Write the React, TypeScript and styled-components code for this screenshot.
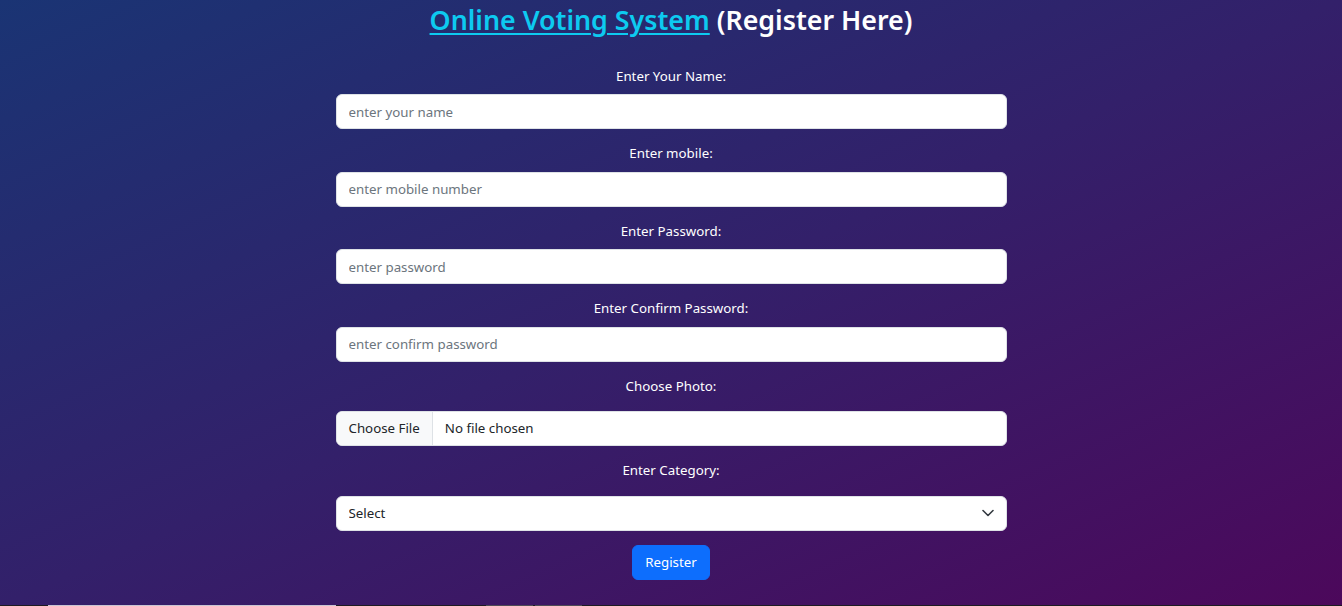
import React from "react";
import styled, { createGlobalStyle } from "styled-components";

const GlobalStyle = createGlobalStyle`
  html, body { margin: 0; padding: 0; }
  body {
    font-family: "Noto Sans", "Open Sans", "Liberation Sans", sans-serif;
    -webkit-font-smoothing: antialiased;
  }
  * { box-sizing: border-box; }
`;

const Page = styled.div`
  min-height: 100vh;
  display: flex;
  flex-direction: column;
  align-items: center;
  background: linear-gradient(to bottom right, #1a3474 0%, #33206a 50%, #4c085b 100%);
`;

const Title = styled.h3`
  margin: 0;
  padding-top: 3px;
  font-size: 26.8px;
  line-height: 33.6px;
  font-weight: 600;
  color: #ffffff;
  text-align: center;
`;

const TitleLink = styled.a`
  color: #0dcaf0;
  text-decoration: underline;
  text-decoration-thickness: 2px;
  text-underline-offset: 3px;
`;

const Form = styled.form`
  width: 50%;
  margin-top: 29px;
  display: flex;
  flex-direction: column;
  gap: 14px;
`;

const Field = styled.div`
  display: flex;
  flex-direction: column;
`;

const Label = styled.label<{ $gap: number }>`
  display: block;
  text-align: center;
  color: #ffffff;
  font-size: 13.3px;
  line-height: 21px;
  margin-bottom: ${(p) => p.$gap}px;
`;

const Input = styled.input`
  display: block;
  width: 100%;
  height: 35px;
  padding: 6px 12px;
  font-family: inherit;
  font-size: 13.3px;
  line-height: 21px;
  color: #212529;
  background: #ffffff;
  border: 1px solid #dee2e6;
  border-radius: 6px;
  outline: none;
  &::placeholder { color: #6c757d; opacity: 1; }
`;

const FileInput = styled.input`
  display: block;
  width: 100%;
  height: 35px;
  padding: 6px 12px;
  font-family: inherit;
  font-size: 13.3px;
  line-height: 21px;
  color: #212529;
  background: #ffffff;
  border: 1px solid #dee2e6;
  border-radius: 6px;
  overflow: hidden;
  &::file-selector-button {
    font-family: inherit;
    font-size: 13.3px;
    line-height: 21px;
    color: #212529;
    padding: 6px 12px;
    margin: -6px 12px -6px -12px;
    background: #f8f9fa;
    border: 0;
    border-right: 1px solid #dee2e6;
    border-radius: 0;
    height: 33px;
  }
`;

const SelectWrap = styled.div`
  position: relative;
`;

const Select = styled.select`
  display: block;
  width: 100%;
  height: 35px;
  padding: 6px 36px 6px 12px;
  font-family: inherit;
  font-size: 13.3px;
  line-height: 21px;
  color: #212529;
  background: #ffffff;
  border: 1px solid #dee2e6;
  border-radius: 6px;
  appearance: none;
  -webkit-appearance: none;
  outline: none;
`;

const Chevron = styled.svg`
  position: absolute;
  right: 13px;
  top: 50%;
  width: 12px;
  height: 8px;
  margin-top: -4px;
  pointer-events: none;
`;

const ButtonRow = styled.div`
  display: flex;
  justify-content: center;
`;

const Button = styled.button`
  height: 35px;
  padding: 6px 12px;
  font-family: inherit;
  font-size: 13.3px;
  line-height: 21px;
  color: #ffffff;
  background: #0d6efd;
  border: 1px solid #0d6efd;
  border-radius: 6px;
  cursor: pointer;
`;

const Spacer = styled.div`
  flex: 1;
`;

const Strip = styled.div`
  align-self: stretch;
  height: 1px;
  display: flex;
  background: #1e1b22;
`;

const Segment = styled.div<{ $w: number; $ml: number; $c: string }>`
  width: ${(p) => p.$w}px;
  margin-left: ${(p) => p.$ml}px;
  background: ${(p) => p.$c};
`;

const fields = [
  { label: "Enter Your Name:", placeholder: "enter your name", type: "text" },
  { label: "Enter mobile:", placeholder: "enter mobile number", type: "text" },
  { label: "Enter Password:", placeholder: "enter password", type: "password" },
  { label: "Enter Confirm Password:", placeholder: "enter confirm password", type: "password" },
];

export default function App() {
  return (
    <>
      <GlobalStyle />
      <Page>
        <Title>
          <TitleLink href="#">Online Voting System</TitleLink> (Register Here)
        </Title>
        <Form onSubmit={(e) => e.preventDefault()}>
          {fields.map((f) => (
            <Field key={f.label}>
              <Label $gap={7.5}>{f.label}</Label>
              <Input type={f.type} placeholder={f.placeholder} />
            </Field>
          ))}
          <Field>
            <Label $gap={14.5}>Choose Photo:</Label>
            <FileInput type="file" />
          </Field>
          <Field>
            <Label $gap={14.5}>Enter Category:</Label>
            <SelectWrap>
              <Select defaultValue="select">
                <option value="select">Select</option>
                <option value="voter">Voter</option>
                <option value="group">Group</option>
              </Select>
              <Chevron viewBox="0 0 12 8">
                <path
                  d="M1 1.5 6 6.5 11 1.5"
                  fill="none"
                  stroke="#343a40"
                  strokeWidth="1.6"
                  strokeLinecap="round"
                  strokeLinejoin="round"
                />
              </Chevron>
            </SelectWrap>
          </Field>
          <ButtonRow>
            <Button type="submit">Register</Button>
          </ButtonRow>
        </Form>
        <Spacer />
        <Strip>
          <Segment $w={288} $ml={48} $c="#c9c5d2" />
          <Segment $w={47} $ml={150} $c="#4f4b55" />
          <Segment $w={47} $ml={2} $c="#4f4b55" />
        </Strip>
      </Page>
    </>
  );
}
